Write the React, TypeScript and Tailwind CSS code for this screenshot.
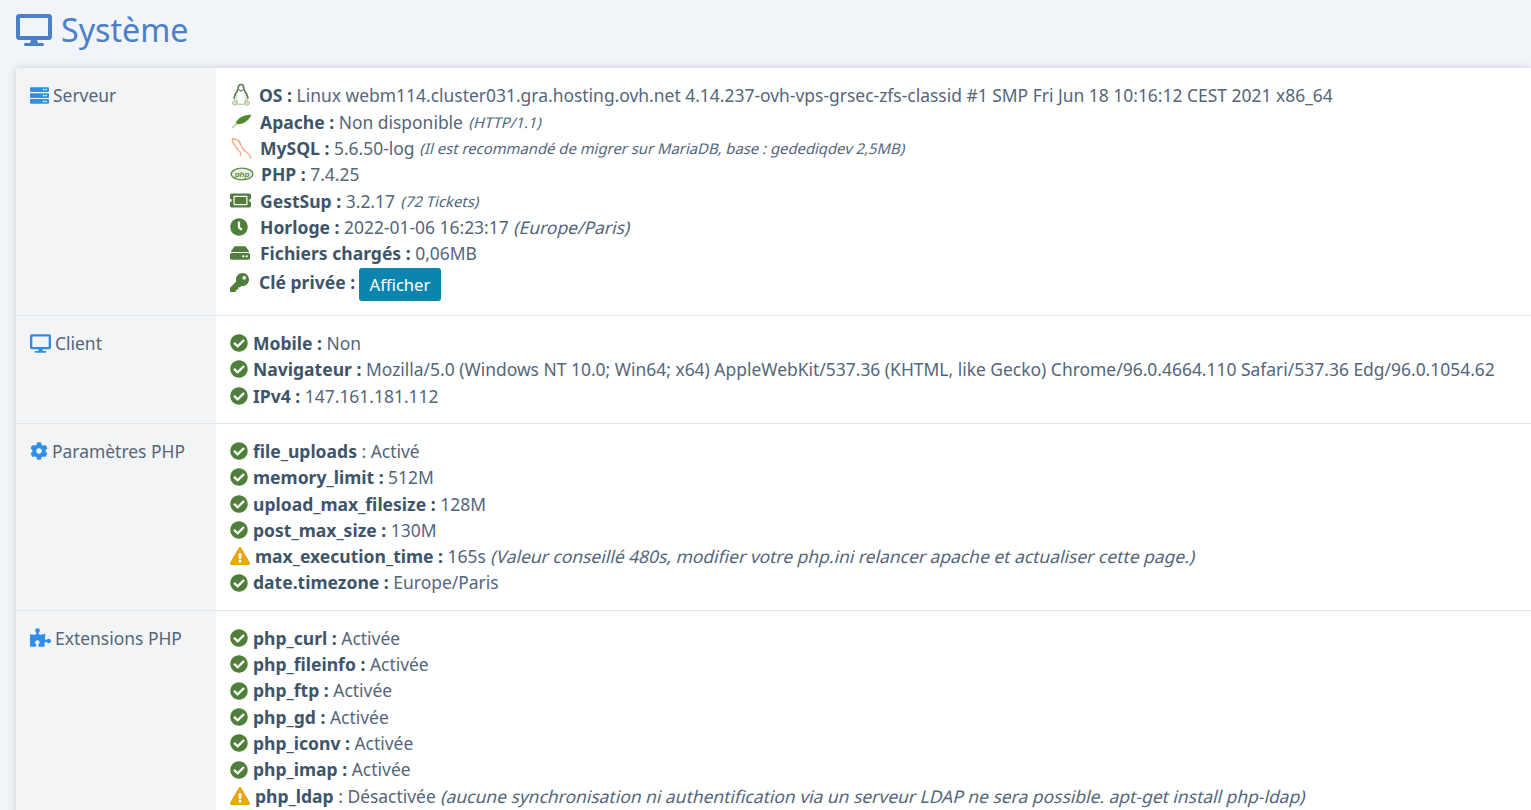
import type { ReactNode } from 'react';
import {
  FaCheckCircle,
  FaClock,
  FaCog,
  FaDesktop,
  FaExclamationTriangle,
  FaHdd,
  FaKey,
  FaPuzzlePiece,
  FaServer,
  FaTicketAlt,
} from 'react-icons/fa';

const GREEN = 'text-[#4f7f3a]';

function TuxIcon() {
  return (
    <svg width="22" height="24" viewBox="0 0 22 24" fill="none" className="shrink-0">
      <path d="M11 1.500c-2 0-2.800 1.700-2.800 3.500 0 2.200-1.200 3.400-2.600 5.800-1 1.800-1.600 3.600-1.400 5.400" stroke="#5f7d52" strokeWidth="1.700" />
      <path d="M11 1.500c2 0 2.800 1.700 2.800 3.500 0 2.200 1.200 3.400 2.600 5.800 1 1.800 1.600 3.600 1.400 5.400" stroke="#5f7d52" strokeWidth="1.700" />
      <path d="M9 6.500 11 8.300l2-1.800" stroke="#7d9870" strokeWidth="1.200" />
      <path d="M2 20.200 5.400 16.800l2.200 3.800-3 2zM20 20.200l-3.400-3.400-2.200 3.800 3 2z" fill="#d5e5c9" stroke="#9dbb8a" strokeWidth="1" />
      <path d="M7.600 21.300h6.800" stroke="#b6cfa6" strokeWidth="1.200" />
      <path d="M7.300 12c-1 2.800-.6 5.500.3 7.500M14.700 12c1 2.800.6 5.500-.3 7.500" stroke="#c4d9b6" strokeWidth="1" />
    </svg>
  );
}

function FeatherIcon() {
  return (
    <svg width="22" height="15" viewBox="0 0 22 15" className="shrink-0 ml-[1px]">
      <path d="M20.500.8C16 .6 10.800 2 7.500 5 5.800 6.500 5 8 4.700 9.500 5.500 10.500 9 10.500 12 9.300 16 7.800 18.800 4.500 20.500.8z" fill="#4f8a2e" />
      <path d="M.8 14.300C2.500 12.300 4 11 6.200 9.300" stroke="#a9c893" strokeWidth="1.300" fill="none" />
    </svg>
  );
}

function DolphinIcon() {
  return (
    <svg width="23" height="23" viewBox="0 0 23 23" fill="none" className="shrink-0 ml-[1px]">
      <path
        d="M1.500 1.500c3.500.3 6 1.800 7.300 4.300 1.300 2.400 1.800 4.500 3.400 6.500 1.600 2 4.200 3.400 5.800 5 .9.900 1.400 2.200 1.700 3.700M1.500 1.500c-.6 2.300.6 4.600 2 6.500 1.500 2 2.500 2.500 3.500 5"
        stroke="#f3ad85"
        strokeWidth="1.400"
        strokeLinecap="round"
      />
      <path d="M7 13c1.500 1 3 3.500 2.500 5.500M8.500 4.500 9 7" stroke="#f3ad85" strokeWidth="1.300" strokeLinecap="round" />
    </svg>
  );
}

function PhpIcon() {
  return (
    <svg width="24" height="14" viewBox="0 0 24 14" className="shrink-0">
      <ellipse cx="12" cy="7" rx="10.800" ry="5.800" fill="#e9f1e2" stroke="#5d8c47" strokeWidth="1.300" />
      <text x="12" y="9.800" textAnchor="middle" fontSize="8" fontStyle="italic" fontWeight="700" fill="#5d8c47" fontFamily="Liberation Sans, sans-serif">
        php
      </text>
    </svg>
  );
}

function Line({ children }: { children: ReactNode }) {
  return <div className="flex items-center h-[26.33px] whitespace-nowrap">{children}</div>;
}

function Check() {
  return <FaCheckCircle className={`${GREEN} text-[18px] mr-[5px] shrink-0`} />;
}

function Warn() {
  return <FaExclamationTriangle className="text-[#e8a70f] text-[20px] mr-[5px] shrink-0" />;
}

function Label({ children }: { children: ReactNode }) {
  return <b className="font-bold text-[17.55px] text-[#3e5569] whitespace-pre">{children}</b>;
}

// la référence a un italique simulé (oblique sur la graisse normale)
function Note({ children, small }: { children: ReactNode; small?: boolean }) {
  return (
    <>
      <span className="whitespace-pre"> </span>
      <span className={`inline-block whitespace-pre skew-x-[-14deg] ml-[2px] ${small ? 'text-[14.85px]' : ''}`}>{children}</span>
    </>
  );
}

function Status({ ok = true, name, value, note }: { ok?: boolean; name: string; value: string; note?: string }) {
  return (
    <Line>
      {ok ? <Check /> : <Warn />}
      <Label>{name}</Label>
      <span className="whitespace-pre"> {value}</span>
      {note && <Note>{note}</Note>}
    </Line>
  );
}

function ServerLine({ icon, name, children, iconWidth = 'w-[30px]' }: { icon: ReactNode; name: string; children: ReactNode; iconWidth?: string }) {
  return (
    <Line>
      <span className={`${iconWidth} shrink-0 flex items-center justify-start`}>{icon}</span>
      <Label>{name}</Label>
      <span className="whitespace-pre"> </span>
      {children}
    </Line>
  );
}

function Row({ icon, title, children, first, last }: { icon: ReactNode; title: string; children: ReactNode; first?: boolean; last?: boolean }) {
  return (
    <div className={`flex ${last ? '' : 'border-b border-[#e2e5e8]'}`}>
      <div className={`w-[200px] shrink-0 bg-[#f3f4f6] pl-[14px] ${first ? 'pt-[14.2px]' : 'pt-[13.6px]'}`}>
        <div className="flex items-center h-[26.33px]">
          {icon}
          <span className="ml-[4px]">{title}</span>
        </div>
      </div>
      <div className={`flex-1 pl-[14px] ${first ? 'pt-[14.2px] pb-[13.8px]' : 'pt-[13.6px] pb-[14.4px]'}`}>{children}</div>
    </div>
  );
}

export default function App() {
  return (
    <div className="h-[810px] overflow-hidden bg-[#f1f4f8] pl-[16px] font-['Noto_Sans',sans-serif] text-[17.45px] leading-[26.33px] text-[#54667a]">
      <h1 className="flex items-center h-[68px] pb-[8px] text-[32.2px] text-[#4a80c9] font-normal">
        <FaDesktop className="text-[36px] mr-[9px]" />
        Système
      </h1>
      <div className="bg-white shadow-[0_0_8px_rgba(0,0,0,0.14)]">
        <Row icon={<FaServer className="text-[#2f8ee8] text-[19px]" />} title="Serveur" first>
          <ServerLine icon={<TuxIcon />} name="OS :" iconWidth="w-[29px]">
            <span>Linux webm114.cluster031.gra.hosting.ovh.net 4.14.237-ovh-vps-grsec-zfs-classid #1 SMP Fri Jun 18 10:16:12 CEST 2021 x86_64</span>
          </ServerLine>
          <ServerLine icon={<FeatherIcon />} name="Apache :">
            <span>Non disponible</span>
            <Note small>(HTTP/1.1)</Note>
          </ServerLine>
          <ServerLine icon={<DolphinIcon />} name="MySQL :">
            <span>5.6.50-log</span>
            <Note small>(Il est recommandé de migrer sur MariaDB, base : gedediqdev 2,5MB)</Note>
          </ServerLine>
          <ServerLine icon={<PhpIcon />} name="PHP :" iconWidth="w-[31px]">
            <span>7.4.25</span>
          </ServerLine>
          <ServerLine icon={<FaTicketAlt className={`${GREEN} text-[21px]`} />} name="GestSup :">
            <span>3.2.17</span>
            <Note small>(72 Tickets)</Note>
          </ServerLine>
          <ServerLine icon={<FaClock className={`${GREEN} text-[18px]`} />} name="Horloge :">
            <span>2022-01-06 16:23:17</span>
            <Note>(Europe/Paris)</Note>
          </ServerLine>
          <ServerLine icon={<FaHdd className={`${GREEN} text-[20px]`} />} name="Fichiers chargés :">
            <span>0,06MB</span>
          </ServerLine>
          <div className="flex items-center h-[35px] pt-[1.5px] whitespace-nowrap">
            <span className="w-[29px] shrink-0 flex items-center mb-[5px]">
              <FaKey className={`${GREEN} text-[19px]`} />
            </span>
            <span className="mb-[5px]">
              <Label>Clé privée :</Label>
            </span>
            <button className="ml-[4px] h-[33px] px-[10.5px] rounded-[3px] bg-[#0b85ad] text-white text-[16.6px]">Afficher</button>
          </div>
        </Row>
        <Row icon={<FaDesktop className="text-[#2f8ee8] text-[21px]" />} title="Client">
          <Status name="Mobile :" value="Non" />
          <Status name="Navigateur :" value="Mozilla/5.0 (Windows NT 10.0; Win64; x64) AppleWebKit/537.36 (KHTML, like Gecko) Chrome/96.0.4664.110 Safari/537.36 Edg/96.0.1054.62" />
          <Status name="IPv4 :" value="147.161.181.112" />
        </Row>
        <Row icon={<FaCog className="text-[#2f8ee8] text-[18px]" />} title="Paramètres PHP">
          <Line>
            <Check />
            <Label>file_uploads</Label>
            <span className="whitespace-pre"> : Activé</span>
          </Line>
          <Status name="memory_limit :" value="512M" />
          <Status name="upload_max_filesize :" value="128M" />
          <Status name="post_max_size :" value="130M" />
          <Status ok={false} name="max_execution_time :" value="165s" note="(Valeur conseillé 480s, modifier votre php.ini relancer apache et actualiser cette page.)" />
          <Status name="date.timezone :" value="Europe/Paris" />
        </Row>
        <Row icon={<FaPuzzlePiece className="text-[#2f8ee8] text-[21px]" />} title="Extensions PHP" last>
          <Status name="php_curl :" value="Activée" />
          <Status name="php_fileinfo :" value="Activée" />
          <Status name="php_ftp :" value="Activée" />
          <Status name="php_gd :" value="Activée" />
          <Status name="php_iconv :" value="Activée" />
          <Status name="php_imap :" value="Activée" />
          <Line>
            <Warn />
            <Label>php_ldap</Label>
            <span className="whitespace-pre"> : Désactivée</span>
            <Note>(aucune synchronisation ni authentification via un serveur LDAP ne sera possible. apt-get install php-ldap)</Note>
          </Line>
        </Row>
      </div>
    </div>
  );
}
